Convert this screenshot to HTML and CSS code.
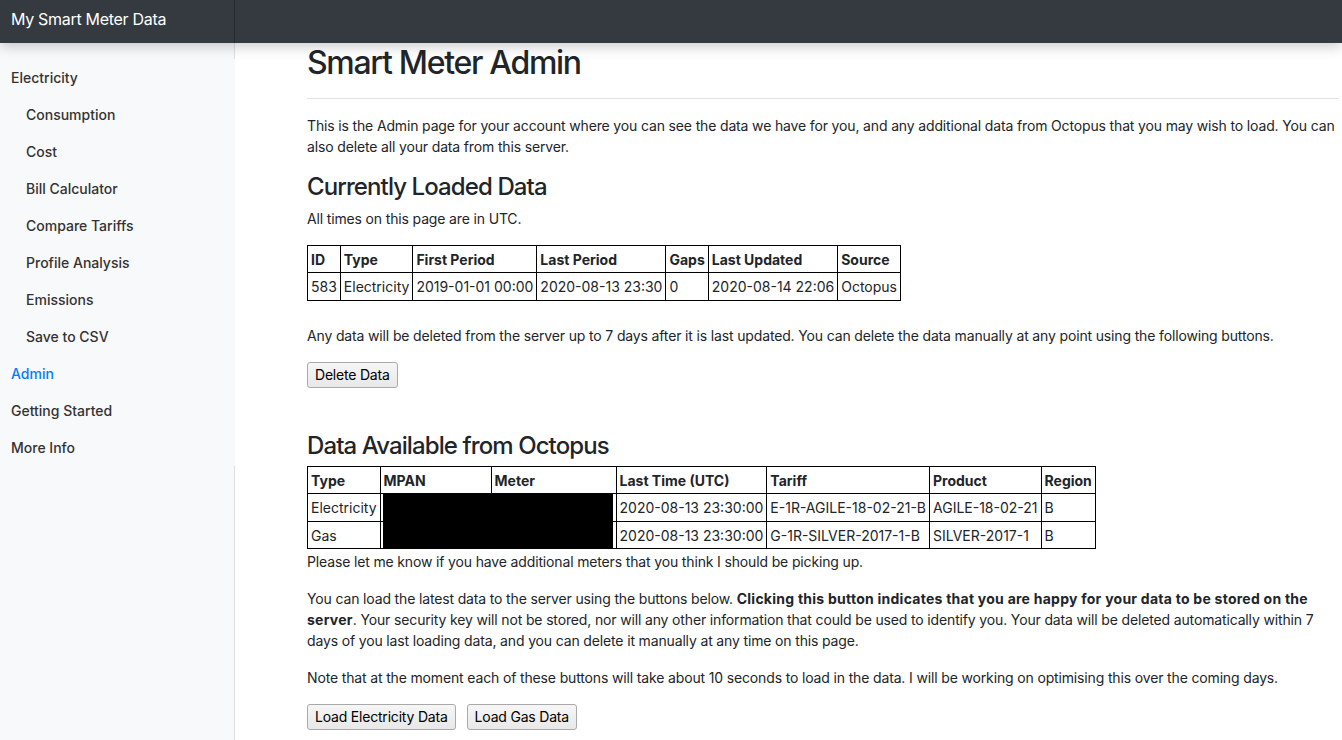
FILE: index.html
```html
<!DOCTYPE html>
<html lang="en">
<head>
    <meta charset="UTF-8">
    <meta name="viewport" content="width=device-width, initial-scale=1.0">
    <title>Smart Meter Admin</title>
    <link rel="stylesheet" href="styles.css">
</head>
<body>
    <div class="page">
        <header class="topbar">
            <a class="brand" href="#">My Smart Meter Data</a>
            <div class="topbar-rest"></div>
        </header>

        <nav class="sidebar">
            <ul class="side-nav">
                <li><a class="side-link" href="#">Electricity</a></li>
                <li><a class="side-link sub" href="#">Consumption</a></li>
                <li><a class="side-link sub" href="#">Cost</a></li>
                <li><a class="side-link sub" href="#">Bill Calculator</a></li>
                <li><a class="side-link sub" href="#">Compare Tariffs</a></li>
                <li><a class="side-link sub" href="#">Profile Analysis</a></li>
                <li><a class="side-link sub" href="#">Emissions</a></li>
                <li><a class="side-link sub" href="#">Save to CSV</a></li>
                <li><a class="side-link active" href="#">Admin</a></li>
                <li><a class="side-link" href="#">Getting Started</a></li>
                <li><a class="side-link" href="#">More Info</a></li>
            </ul>
        </nav>

        <main class="main">
            <div class="title-bar">
                <h1 class="page-title">Smart Meter Admin</h1>
            </div>

            <p>This is the Admin page for your account where you can see the data we have for you, and any additional data from Octopus that you may wish to load. You can also delete all your data from this server.</p>

            <h3 class="section-title">Currently Loaded Data</h3>
            <p>All times on this page are in UTC.</p>

            <table class="data-table">
                <tr>
                    <th>ID</th><th>Type</th><th>First Period</th><th>Last Period</th><th>Gaps</th><th>Last Updated</th><th>Source</th>
                </tr>
                <tr>
                    <td>583</td><td>Electricity</td><td>2019-01-01 00:00</td><td>2020-08-13 23:30</td><td>0</td><td>2020-08-14 22:06</td><td>Octopus</td>
                </tr>
            </table>

            <p class="after-table">Any data will be deleted from the server up to 7 days after it is last updated. You can delete the data manually at any point using the following buttons.</p>

            <div class="btn-row">
                <button class="btn">Delete Data</button>
            </div>

            <h3 class="section-title octopus">Data Available from Octopus</h3>
            <div class="redact-wrap">
                <table class="data-table">
                    <tr>
                        <th>Type</th><th class="col-mpan">MPAN</th><th class="col-meter">Meter</th><th>Last Time (UTC)</th><th>Tariff</th><th>Product</th><th>Region</th>
                    </tr>
                    <tr>
                        <td>Electricity</td><td></td><td></td><td>2020-08-13 23:30:00</td><td>E-1R-AGILE-18-02-21-B</td><td>AGILE-18-02-21</td><td>B</td>
                    </tr>
                    <tr>
                        <td>Gas</td><td></td><td></td><td>2020-08-13 23:30:00</td><td>G-1R-SILVER-2017-1-B</td><td>SILVER-2017-1</td><td>B</td>
                    </tr>
                </table>
                <div class="redacted"></div>
            </div>
            <p class="meters-note">Please let me know if you have additional meters that you think I should be picking up.</p>

            <p>You can load the latest data to the server using the buttons below. <b>Clicking this button indicates that you are happy for your data to be stored on the server</b>. Your security key will not be stored, nor will any other information that could be used to identify you. Your data will be deleted automatically within 7 days of you last loading data, and you can delete it manually at any time on this page.</p>

            <p>Note that at the moment each of these buttons will take about 10 seconds to load in the data. I will be working on optimising this over the coming days.</p>

            <div class="btn-row">
                <button class="btn">Load Electricity Data</button>
                <button class="btn">Load Gas Data</button>
            </div>
        </main>
    </div>
</body>
</html>
```

FILE: styles.css
```css
body {
    margin: 0;
    padding: 0;
    font-family: Inter, "Noto Sans", sans-serif;
    font-size: 14px;
    line-height: 1.5;
    color: #212529;
    background: #fff;
    overflow: hidden;
}
.page {
    display: grid;
    grid-template-columns: 235px 1fr;
    grid-template-rows: 43px 1fr;
    min-height: 100vh;
}
.topbar {
    grid-column: 1 / 3;
    display: flex;
    background: #343a40;
    position: relative;
    z-index: 10;
    box-shadow: 0 3px 14px rgba(0, 0, 0, 0.22);
}
.brand {
    width: 235px;
    box-sizing: border-box;
    padding: 0 11px 5px;
    display: flex;
    align-items: center;
    color: #fff;
    font-size: 16px;
    letter-spacing: -0.3px;
    text-decoration: none;
    box-shadow: inset -1px 0 0 rgba(0, 0, 0, 0.25);
}
.topbar-rest {
    flex: 1;
}
.sidebar {
    background: #f8f9fa;
    padding-top: 16px;
    box-shadow: inset -1px 0 0 rgba(0, 0, 0, 0.1);
}
.side-nav {
    list-style: none;
    margin: 0;
    padding: 0;
    background: #f8f9fa;
}
.side-link {
    display: block;
    padding: 8px 11px;
    font-size: 14px;
    line-height: 21px;
    font-weight: 500;
    color: #333;
    text-decoration: none;
}
.side-link.sub {
    padding-left: 26px;
}
.side-link.active {
    color: #007bff;
}
.main {
    padding: 0 4px 0 72px;
    min-width: 0;
}
.title-bar {
    padding-top: 1px;
    padding-bottom: 8px;
    margin-bottom: 16px;
    border-bottom: 1px solid #dee2e6;
}
.page-title {
    margin: 0 0 8px;
    font-size: 32px;
    font-weight: 500;
    letter-spacing: -1.3px;
    line-height: 1.2;
}
p {
    margin: 0 0 16px;
    letter-spacing: -0.15px;
}
p b {
    letter-spacing: 0.25px;
}
.section-title {
    margin: 0 0 6px;
    font-size: 24px;
    font-weight: 500;
    letter-spacing: -0.9px;
    line-height: 1.2;
}
.section-title.octopus {
    margin-top: 44px;
    margin-bottom: 6px;
}
.data-table {
    border-collapse: collapse;
    margin-bottom: 0;
}
.data-table th,
.data-table td {
    border: 1px solid #000;
    padding: 2.5px 3px;
    text-align: left;
    white-space: nowrap;
}
.data-table td {
    padding-top: 3px;
}
.data-table th {
    font-weight: 700;
}
.col-mpan {
    width: 104px;
}
.col-meter {
    width: 118px;
}
.after-table {
    margin-top: 24px;
}
.meters-note {
    margin-top: -3px;
}
.btn-row {
    display: flex;
    gap: 11px;
}
.btn {
    font-family: inherit;
    font-size: 14px;
    letter-spacing: -0.2px;
    line-height: 18px;
    padding: 3px 7px;
    height: 26px;
    color: #000;
    background: linear-gradient(#f6f6f6, #e8e8e8);
    border: 1px solid #a9a9a9;
    border-radius: 3px;
}
.redact-wrap {
    position: relative;
    display: inline-block;
}
.redacted {
    position: absolute;
    left: 76px;
    top: 28px;
    width: 230px;
    height: 54px;
    background: #000;
}
```
